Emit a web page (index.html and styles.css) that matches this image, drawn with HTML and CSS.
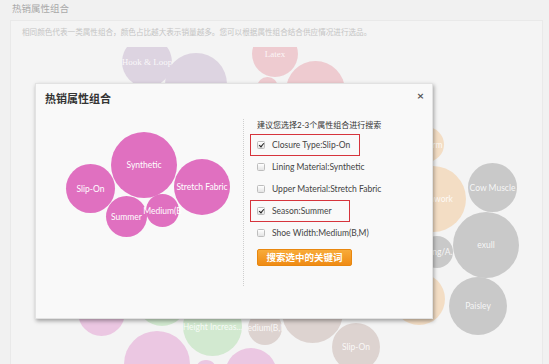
FILE: index.html
```html
<!DOCTYPE html>
<html lang="zh-CN">
<head>
    <meta charset="UTF-8">
    <title>热销属性组合</title>
    <link rel="stylesheet" href="styles.css">
</head>
<body>
    <div class="page">
        <h2 class="page-title">热销属性组合</h2>
        <div class="panel">
            <p class="panel-desc">相同颜色代表一类属性组合，颜色占比越大表示销量越多。您可以根据属性组合结合供应情况进行选品。</p>
            <div class="bubble-chart">
                <div class="bubble serif purple" style="left:111px;top:-10px;width:50px;height:50px">Hook &amp; Loop</div>
                <div class="bubble purple" style="left:154px;top:6px;width:62px;height:62px"></div>
                <div class="bubble serif rose" style="left:241px;top:-16px;width:46px;height:46px">Latex</div>
                <div class="bubble rose" style="left:275px;top:14px;width:59px;height:59px"></div>
                <div class="bubble rose" style="left:246px;top:30px;width:21px;height:21px"></div>

                <div class="bubble orange" style="left:398px;top:80px;width:35px;height:35px">Platform</div>
                <div class="bubble orange" style="left:389px;top:119px;width:66px;height:66px">Patchwork</div>
                <div class="bubble gray" style="left:410px;top:189px;width:32px;height:32px">Lacing/A...</div>
                <div class="bubble orange" style="left:382px;top:226px;width:52px;height:52px">Pleats</div>
                <div class="bubble gray" style="left:457px;top:116px;width:49px;height:49px">Cow Muscle</div>
                <div class="bubble gray" style="left:442px;top:165px;width:66px;height:66px">exull</div>
                <div class="bubble gray" style="left:438px;top:230px;width:58px;height:58px">Paisley</div>

                <div class="bubble pink" style="left:67px;top:242px;width:47px;height:47px"></div>
                <div class="bubble green" style="left:126px;top:229px;width:50px;height:50px"></div>
                <div class="bubble green" style="left:172px;top:250px;width:59px;height:59px">Height Increas...</div>
                <div class="bubble pink low" style="left:113px;top:284px;width:66px;height:66px">Synthetic</div>
                <div class="bubble pink" style="left:184px;top:313px;width:22px;height:22px"></div>
                <div class="bubble pink" style="left:214px;top:301px;width:52px;height:52px"></div>
                <div class="bubble brown" style="left:237px;top:264px;width:34px;height:34px">Medium(B,M)</div>
                <div class="bubble brown" style="left:271px;top:235px;width:61px;height:61px"></div>
                <div class="bubble brown" style="left:321px;top:276px;width:48px;height:48px">Slip-On</div>
            </div>
        </div>
    </div>

    <div class="dialog">
        <div class="dialog-head">
            <h3>热销属性组合</h3>
            <span class="dialog-close">×</span>
        </div>
        <div class="dialog-body">
            <div class="combo-chart">
                <div class="combo" style="left:75px;top:14px;width:66px;height:66px">Synthetic</div>
                <div class="combo" style="left:30px;top:46px;width:49px;height:49px">Slip-On</div>
                <div class="combo" style="left:138px;top:41px;width:56px;height:56px">Stretch Fabric</div>
                <div class="combo" style="left:70px;top:78px;width:41px;height:41px">Summer</div>
                <div class="combo open" style="left:110px;top:76px;width:33px;height:33px">Medium(B</div>
            </div>
            <div class="combo-side">
                <p class="hint">建议您选择2-3个属性组合进行搜索</p>
                <ul class="attr-list">
                    <li class="attr marked"><span class="check on"></span>Closure Type:Slip-On</li>
                    <li class="attr"><span class="check"></span>Lining Material:Synthetic</li>
                    <li class="attr"><span class="check"></span>Upper Material:Stretch Fabric</li>
                    <li class="attr marked wide"><span class="check on"></span>Season:Summer</li>
                    <li class="attr"><span class="check"></span>Shoe Width:Medium(B,M)</li>
                </ul>
                <button class="search-btn">搜索选中的关键词</button>
            </div>
        </div>
    </div>
</body>
</html>
```

FILE: styles.css
```css
* {
    margin: 0;
    padding: 0;
    box-sizing: border-box;
}

body {
    font-family: Lato, 'Noto Sans CJK SC', sans-serif;
    color: #333;
    background: #f1f1f1;
    width: 549px;
    height: 364px;
    overflow: hidden;
    position: relative;
}

.page {
    height: 100%;
    padding: 2px 6px 0 10px;
    display: flex;
    flex-direction: column;
}

.page-title {
    font-size: 9.5px;
    font-weight: normal;
    line-height: 14px;
    color: #a9a9a9;
    padding-left: 2px;
    margin-bottom: 4px;
}

.panel {
    flex: 1;
    display: flex;
    flex-direction: column;
    background: #f4f4f4;
    border: 1px solid #e9e9e9;
    border-bottom: none;
}

.panel-desc {
    font-size: 7.6px;
    line-height: 11px;
    color: #c4c4c4;
    padding: 5.5px 0 0 11px;
}

.bubble-chart {
    flex: 1;
    position: relative;
    overflow: hidden;
    margin-top: 9.5px;
}

.bubble {
    position: absolute;
    border-radius: 50%;
    overflow: hidden;
    display: flex;
    align-items: center;
    justify-content: center;
    white-space: nowrap;
    font-size: 8.5px;
    color: rgba(255,255,255,0.85);
}

.bubble.serif {
    font-family: 'Liberation Serif', serif;
    font-size: 9px;
}

.bubble.low {
    align-items: flex-end;
    padding-bottom: 4px;
}

.purple { background: #ddd4e1; }
.rose { background: #eecbd0; }
.pink { background: #ebc7e2; }
.green { background: #d2e9d0; }
.brown { background: #ddd3d0; }
.orange { background: #f3ddc4; }
.gray { background: #c9c9c9; }

/* 弹出层 */
.dialog {
    position: absolute;
    left: 35px;
    top: 83px;
    width: 398px;
    height: 236px;
    background: #f9f9f9;
    border: 1px solid #e2e2e2;
    box-shadow: 1px 2px 4px rgba(0,0,0,0.35);
    z-index: 10;
}

.dialog-head {
    display: flex;
    justify-content: space-between;
    align-items: flex-start;
    padding: 8px 8px 0 9px;
    height: 34px;
}

.dialog-head h3 {
    font-size: 11px;
    line-height: 14px;
    color: #333;
    font-weight: bold;
}

.dialog-close {
    font-size: 12px;
    line-height: 8px;
    font-weight: bold;
    color: #555;
}

.dialog-body {
    display: flex;
}

.combo-chart {
    position: relative;
    width: 207px;
    height: 170px;
}

.combo {
    position: absolute;
    border-radius: 50%;
    background: #e070c0;
    color: #fff;
    display: flex;
    align-items: center;
    justify-content: center;
    white-space: nowrap;
    font-size: 8.5px;
    overflow: hidden;
}

.combo.open {
    overflow: visible;
}

.combo-side {
    margin-top: 1px;
    height: 167px;
    border-left: 1px dotted #cfcfcf;
    padding-left: 13px;
}

.hint {
    font-size: 8px;
    line-height: 13px;
    color: #333;
}

.attr-list {
    list-style: none;
    margin-top: 2px;
}

.attr {
    display: flex;
    align-items: center;
    width: fit-content;
    height: 22px;
    margin-left: -7px;
    padding: 0 9px 0 6px;
    border: 1.5px solid transparent;
    font-size: 8.5px;
    color: #444;
}

.attr.marked {
    border-color: #d6343c;
}

.attr.wide {
    padding-right: 17px;
}

.check {
    width: 8px;
    height: 8px;
    margin-right: 7px;
    border: 1px solid #bdbdbd;
    border-radius: 1.5px;
    background: linear-gradient(#ffffff, #e4e4e4);
    position: relative;
}

.check.on::after {
    content: '';
    position: absolute;
    left: 2px;
    top: 0;
    width: 2px;
    height: 4px;
    border: solid #222;
    border-width: 0 1.5px 1.5px 0;
    transform: rotate(40deg);
}

.search-btn {
    margin-top: 5px;
    width: 95px;
    height: 17px;
    border: 1px solid #e8870f;
    border-radius: 2px;
    background: linear-gradient(#f8ab3a, #ef8b14);
    color: #fff;
    font-family: 'Noto Sans CJK SC', sans-serif;
    font-size: 9.5px;
    font-weight: bold;
    line-height: 15px;
}
```
